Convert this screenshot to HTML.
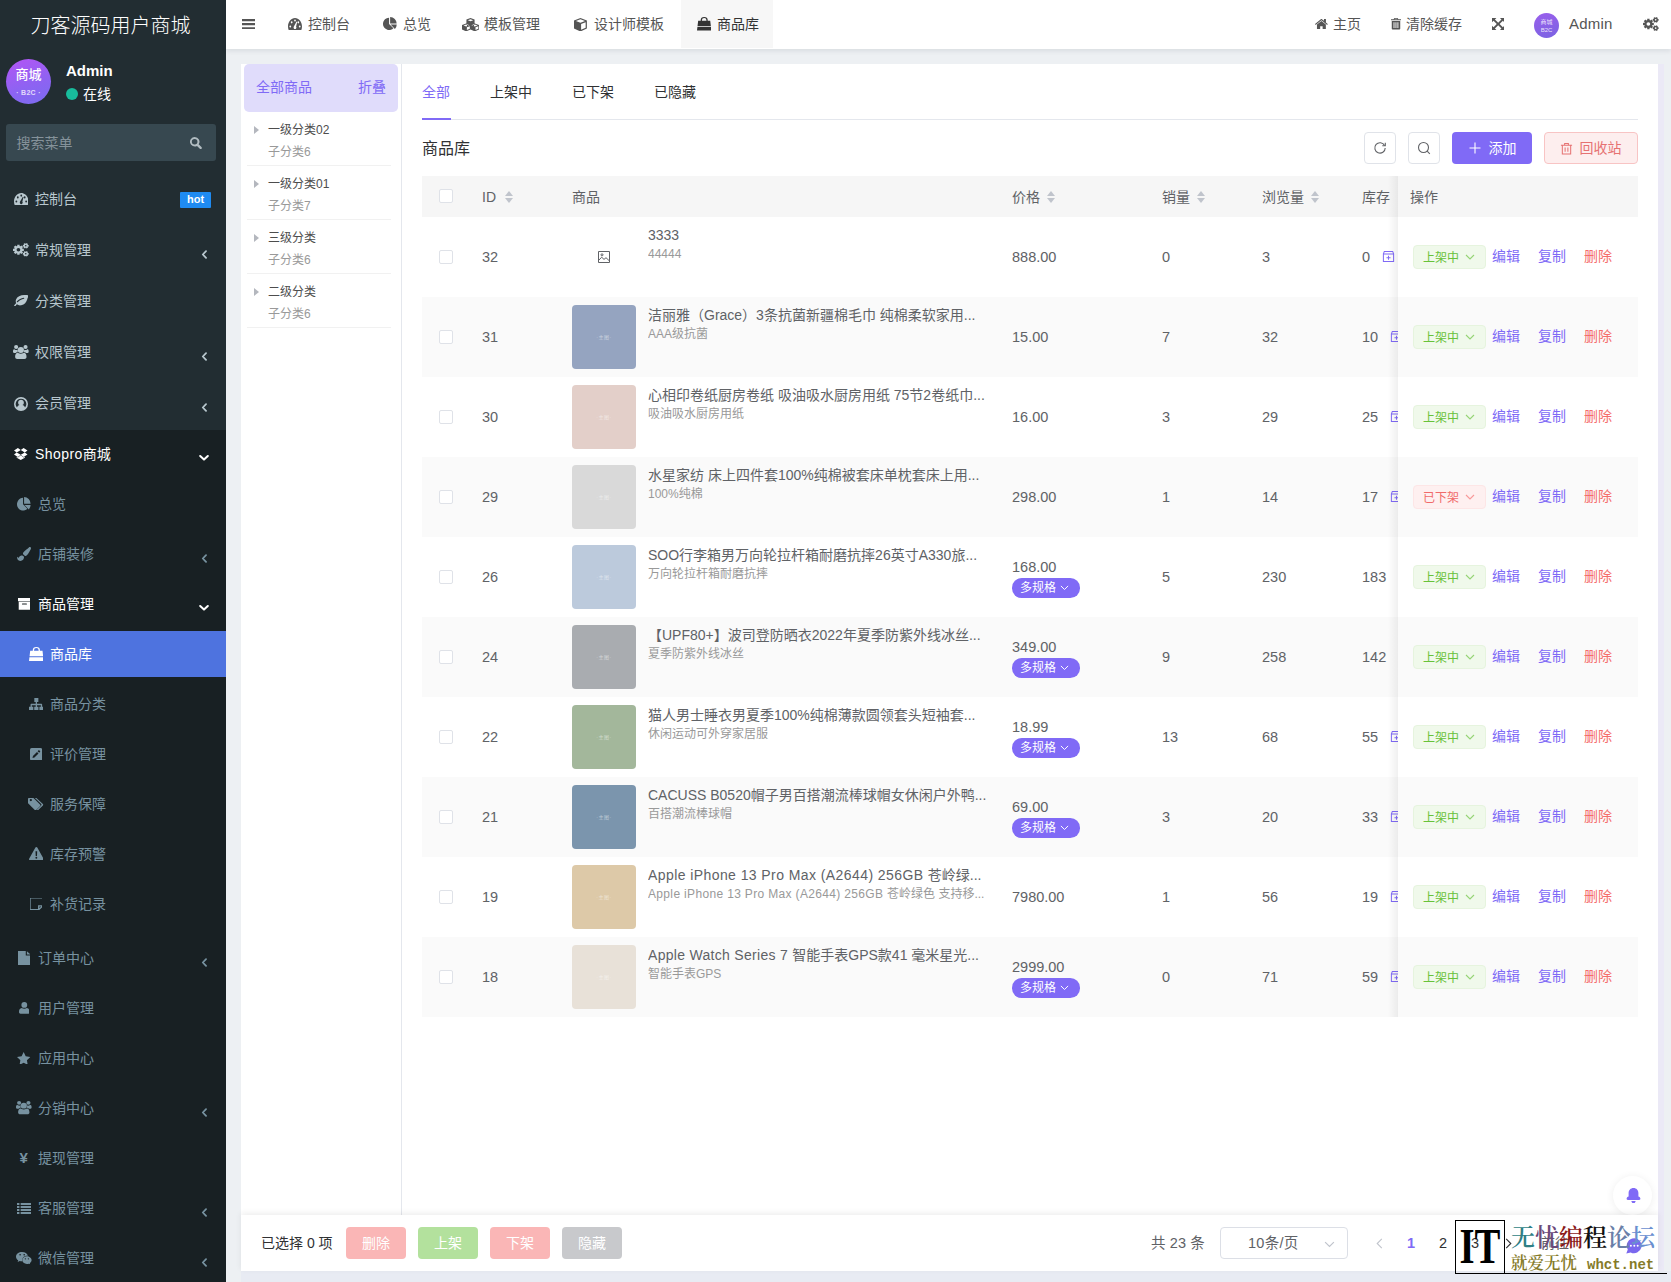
<!DOCTYPE html>
<html lang="zh-CN"><head><meta charset="utf-8"><title>商品库</title>
<style>

*{box-sizing:border-box;margin:0;padding:0}
html,body{width:1671px;height:1282px;overflow:hidden;background:#edf0f3}
body{font-family:"Liberation Sans","Noto Sans CJK SC",sans-serif;font-size:14px;color:#606266;-webkit-font-smoothing:antialiased}
#app{position:relative;width:1671px;height:1282px;overflow:hidden}
.ic{display:block}
.abs{position:absolute}
/* sidebar */
#side{position:absolute;left:0;top:0;width:226px;height:1282px;background:#222d32;color:#b8c7ce}
#side .dark{position:absolute;left:0;top:430px;width:226px;height:852px;background:#182023}
#logo{position:absolute;left:0;top:0;width:221px;height:50px;line-height:52px;text-align:center;color:#fff;font-size:20px;font-weight:300;letter-spacing:0}
#avatar{position:absolute;left:6px;top:59px;width:45px;height:45px;border-radius:50%;background:linear-gradient(160deg,#b455f5 0%,#8f62f2 55%,#7a6cf0 100%);color:#fff;text-align:center}
#avatar .a1{position:absolute;left:0;right:0;top:8px;font-size:13px;line-height:16px;font-weight:500}
#avatar .a2{position:absolute;left:0;right:0;top:30px;font-size:7px;line-height:8px;font-weight:bold;opacity:.75;letter-spacing:.3px}
#uname{position:absolute;left:66px;top:61px;font-size:15px;line-height:20px;font-weight:bold;color:#fff}
#ustat{position:absolute;left:83px;top:84px;font-size:14px;line-height:20px;color:#fff}
#udot{position:absolute;left:66px;top:88px;width:12px;height:12px;border-radius:50%;background:#18bc9c}
#sbox{position:absolute;left:6px;top:124px;width:210px;height:37px;background:#374850;border-radius:3px}
#sbox span{position:absolute;left:10.500px;top:0;line-height:38px;font-size:14px;color:#85929a}
#sbox svg{color:#b1bcc1}
.mi{position:absolute;left:0;width:226px;height:46px;color:#b8c7ce;font-size:14px}
.mi .t{position:absolute;top:0;line-height:46px;white-space:nowrap}
.mi.l1 .t{left:35px}.mi.l2 .t{left:38px}.mi.l3 .t{left:50px}
.mi.sub{color:#7792a0}
.mi.on{color:#fff}
.mi.act{background:#4e73df;color:#fff}
.mi .ar{position:absolute;left:200.500px;top:22.500px;width:7.200px;height:9px}
.hot{position:absolute;left:180px;top:16px;width:31px;height:16px;background:#1f8bf2;color:#fff;font-size:11px;font-weight:bold;line-height:15px;text-align:center;border-radius:1px}
/* topbar */
#top{position:absolute;left:226px;top:0;width:1445px;height:49px;background:#fff;box-shadow:0 2px 5px rgba(0,21,41,.09);color:#555}
#top .tab{position:absolute;top:0;height:48px;line-height:48px;font-size:14px;color:#555;white-space:nowrap}
#top .tabon{position:absolute;left:455px;top:0;width:92px;height:48px;background:#f7f7f7}

/* main */
#cat{position:absolute;left:241px;top:64px;width:161px;height:1151px;background:#fff;border-right:1px solid #e4e7ed}
#cat .hd{position:absolute;left:3px;top:0;width:154px;height:47.500px;background:#e0dcfb;border-radius:5px;color:#806af6;font-size:14px;line-height:47px}
#cat .hd .a{position:absolute;left:12px}#cat .hd .b{position:absolute;right:12px}
.ct{position:absolute;left:6px;width:144px;height:54px;border-bottom:1px solid #f1f1f1}
.ct .n{position:absolute;left:21px;top:7.500px;font-size:12px;line-height:20px;color:#4d4d4d}
.ct .s{position:absolute;left:21px;top:30px;font-size:12px;line-height:20px;color:#999}
.ct i{position:absolute;left:7px;top:13.500px;width:0;height:0;border-left:5px solid #b4b7be;border-top:4px solid transparent;border-bottom:4px solid transparent}
#main{position:absolute;left:402px;top:64px;width:1256px;height:1151px;background:#fff}
#min{position:absolute;left:0;top:-2px;width:1256px;height:1153px}
#rail{position:absolute;left:1658px;top:64px;width:6px;height:1207px;background:#ebe9f6}
#tabs{position:absolute;left:20px;top:0;width:1216px;height:58px;border-bottom:1px solid #e4e7ed;font-size:14px;color:#303133}
#tabs span{position:absolute;top:20px;line-height:20px}
#tabs .bar{position:absolute;left:0;top:56px;width:29px;height:2px;background:#806af6}
#title{position:absolute;left:20px;top:75px;font-size:16px;line-height:24px;color:#303133}
.btn{position:absolute;top:70px;height:32px;border-radius:4px;font-size:14px;line-height:30px;text-align:center}
.btn.w{width:32px;background:#fff;border:1px solid #e0e3e9;color:#606266}
.btn svg{position:absolute}
#th{position:absolute;left:20px;top:114px;width:1216px;height:41px;background:#f6f6f6;font-size:14px;color:#606266}
#th span{position:absolute;top:0;line-height:42.500px}
.sort{position:absolute;top:15px;width:8px;height:12px}
.sort:before,.sort:after{content:"";position:absolute;left:0;border-left:4px solid transparent;border-right:4px solid transparent}
.sort:before{top:0;border-bottom:5px solid #c0c4cc}
.sort:after{top:7px;border-top:5px solid #c0c4cc}
.cb{position:absolute;width:14px;height:14px;border:1px solid #dfe2e8;border-radius:2px;background:#fff}
.row{position:absolute;left:20px;width:1216px;height:80px;font-size:14px;color:#606266}
.row.alt{background:#fafafa}
.row .c{position:absolute;line-height:20px;white-space:nowrap;font-size:14.500px}
.row .img{position:absolute;left:150px;top:8px;width:64px;height:64px;border-radius:4px}
.row .img b{position:absolute;left:0;width:64px;text-align:center;top:29px;font-size:5px;line-height:6px;color:rgba(255,255,255,.5);font-weight:normal;white-space:nowrap;letter-spacing:.5px}
.row .tt{position:absolute;left:226px;top:8px;width:340px;font-size:14px;line-height:20px;color:#606266;white-space:nowrap;overflow:hidden}
.row .st{position:absolute;left:226px;top:28px;width:340px;font-size:12px;line-height:18px;color:#999;white-space:nowrap;overflow:hidden}
.pill{position:absolute;left:590px;top:41px;width:68px;height:19.500px;border-radius:9.750px;background:#806af6;color:#fff;font-size:12px;line-height:20px;padding-left:8px}
.pill svg{position:absolute;left:48px;top:6.500px}
.fix{position:absolute;left:976px;top:0;width:240px;height:80px;background:#fff}
.row.alt .fix{background:#fafafa}
.tag{position:absolute;left:15px;top:28px;width:73px;height:24px;border-radius:4px;font-size:12px;line-height:25.500px;padding-left:9px}
.tag.g{background:#f0f9eb;border:1px solid #e6f4de;color:#67c23a}
.tag.r{background:#fef0f0;border:1px solid #fde6e6;color:#f06a6a}
.tag svg{position:absolute;left:51px;top:8px}
.fix a{position:absolute;top:29px;line-height:20px;font-size:14px;text-decoration:none}
.fix a.p{color:#806af6}.fix a.d{color:#f56c6c}
#shadow{position:absolute;left:986px;top:114px;width:10px;height:841px;background:linear-gradient(to right,rgba(0,0,0,0),rgba(0,0,0,.06))}
/* footer */
#band{position:absolute;left:241px;top:1271px;width:1430px;height:11px;background:#e8ebf3}
#foot{position:absolute;left:241px;top:1215px;width:1417px;height:56px;background:#fff;box-shadow:0 -2px 6px rgba(0,0,0,.07);font-size:14px;color:#303133}
#foot .fb{position:absolute;top:12px;width:60px;height:32px;border-radius:4px;color:#fff;text-align:center;line-height:32px;font-size:14px}
#foot span{position:absolute;line-height:20px;top:18px;white-space:nowrap}
#psel{position:absolute;left:979px;top:12px;width:128px;height:32px;border:1px solid #dcdfe6;border-radius:4px}
.fab{position:absolute;width:40px;height:40px;border-radius:50%;background:#fff;box-shadow:0 1px 8px rgba(0,0,0,.07)}
/* watermark */
#wm{position:absolute;left:1455px;top:1220px;width:216px;height:56px}
#wm .it{position:absolute;left:0;top:0;width:50px;height:54px;border:1px solid #000}
#wm .it b{position:absolute;left:-8px;top:-3px;width:64px;text-align:center;font-family:"Liberation Serif",serif;font-weight:bold;font-size:51px;line-height:56px;color:#000;transform:scaleX(.76);transform-origin:50% 50%}
#wm .l1{position:absolute;left:56px;top:-1px;font-family:"Noto Serif CJK SC","Liberation Serif",serif;font-weight:600;font-size:24px;line-height:34px;white-space:nowrap}
#wm .l2{position:absolute;left:56px;top:32px;font-family:"Noto Serif CJK SC","Liberation Serif",serif;font-size:16.500px;line-height:20px;color:#857a28;white-space:nowrap;font-weight:600}
#wm .l2 i{font-style:normal;font-family:"Liberation Mono",monospace;font-weight:bold;font-size:14px;margin-left:10px}
#wm .ul{position:absolute;left:0;top:53px;width:212px;height:1px;background:#000}

</style></head><body>
<div id="app">
<div id="side">
<div class="dark"></div>
<div id="logo">刀客源码用户商城</div>
<div id="avatar"><div class="a1">商城</div><div class="a2">· B2C ·</div></div>
<div id="uname">Admin</div><div id="udot"></div><div id="ustat">在线</div>
<div id="sbox"><span>搜索菜单</span><svg class="ic" style="position:absolute;left:184.3px;top:12.9px;" width="11.8" height="12" viewBox="1.27 1 13.83 14.49" preserveAspectRatio="none"><path fill="currentColor" fill-rule="evenodd" d="M6.700 1a5.700 5.700 0 014.700 8.900l3.300 3.300a1.300 1.300 0 01-1.900 1.900l-3.300-3.300A5.700 5.700 0 116.700 1zm0 2.400a3.300 3.300 0 100 6.600 3.300 3.300 0 000-6.600z"/></svg></div>
<div class="mi l1 " style="top:176px"><svg class="ic" style="position:absolute;left:13.8px;top:16.8px;" width="14.5" height="12.4" viewBox="0 2.2 16 11.6" preserveAspectRatio="none"><path fill="currentColor" d="M8 2.2C3.6 2.2 0 5.8 0 10.2c0 1.3.3 2.5.9 3.6h14.2c.6-1.1.9-2.300.9-3.6 0-4.4-3.600-8-8-8zM8 3.600a1 1 0 110 2 1 1 0 010-2zM2.600 11.200a1 1 0 110-2 1 1 0 010 2zM4.200 7.300a1 1 0 110-2 1 1 0 010 2zM9.400 11.800a1.600 1.600 0 01-2.800 0c-.3-.6-.2-1.300.3-1.800L9.800 5.600l.7.300-1.300 4.600c.5.300.5.900.2 1.300zM11.800 7.300a1 1 0 110-2 1 1 0 010 2zM13.400 11.200a1 1 0 110-2 1 1 0 010 2z"/></svg><span class="t">控制台</span><span class="hot">hot</span></div><div class="mi l1 " style="top:227px"><svg class="ic" style="position:absolute;left:13.2px;top:16.2px;" width="15.7" height="13.6" viewBox="0.13 0.57 15.82 14.86" preserveAspectRatio="none"><path fill="currentColor" fill-rule="evenodd" d="M9.73 6.82L11.07 6.80L11.07 9.20L9.73 9.18L9.36 10.09L10.32 11.02L8.62 12.72L7.69 11.76L6.78 12.13L6.80 13.47L4.40 13.47L4.42 12.13L3.51 11.76L2.58 12.72L0.88 11.02L1.84 10.09L1.47 9.18L0.13 9.20L0.13 6.80L1.47 6.82L1.84 5.91L0.88 4.98L2.58 3.28L3.51 4.24L4.42 3.87L4.40 2.53L6.80 2.53L6.78 3.87L7.69 4.24L8.62 3.28L10.32 4.98L9.36 5.91ZM3.70 8.00a1.90 1.90 0 1 0 3.80 0a1.90 1.90 0 1 0 -3.80 0Z M15.12 2.71L15.95 2.64L15.95 4.56L15.12 4.49L14.83 4.99L15.30 5.67L13.64 6.63L13.29 5.88L12.71 5.88L12.36 6.63L10.70 5.67L11.17 4.99L10.88 4.49L10.05 4.56L10.05 2.64L10.88 2.71L11.17 2.21L10.70 1.53L12.36 0.57L12.71 1.32L13.29 1.32L13.64 0.57L15.30 1.53L14.83 2.21ZM12.15 3.60a0.85 0.85 0 1 0 1.70 0a0.85 0.85 0 1 0 -1.70 0Z M15.12 11.51L15.95 11.44L15.95 13.36L15.12 13.29L14.83 13.79L15.30 14.47L13.64 15.43L13.29 14.68L12.71 14.68L12.36 15.43L10.70 14.47L11.17 13.79L10.88 13.29L10.05 13.36L10.05 11.44L10.88 11.51L11.17 11.01L10.70 10.33L12.36 9.37L12.71 10.12L13.29 10.12L13.64 9.37L15.30 10.33L14.83 11.01ZM12.15 12.40a0.85 0.85 0 1 0 1.70 0a0.85 0.85 0 1 0 -1.70 0Z"/></svg><span class="t">常规管理</span><svg class="ar" viewBox="0 0 8 10"><path d="M5.6 1.200L2 5l3.600 3.800" fill="none" stroke="currentColor" stroke-width="2" stroke-linecap="round" stroke-linejoin="round"/></svg></div><div class="mi l1 " style="top:278px"><svg class="ic" style="position:absolute;left:13.7px;top:16.6px;" width="14.6" height="11.7" viewBox="0.02 2.58 15.69 11.82" preserveAspectRatio="none"><path fill="currentColor" d="M15.600 3.200C15 2.800 13.500 2.500 11 2.600 7 2.700 3.400 4.200 2.200 7.200c-.5 1.300-.4 2.600.1 3.700-.8.700-1.600 1.500-2.200 2.500-.2.300 0 .7.300.9.400.2.800.1 1-.2.500-.800 1.100-1.500 1.800-2.100 1.200 1 2.900 1.400 4.600 1 3.700-.9 5.400-3.300 6.300-5.700.5-1.300.9-2.400 1.400-3.200.2-.3.300-.7.100-.9zM10.700 6.400C8 6.800 5.800 8.100 4 9.800c-.2.200-.6.200-.8 0-.2-.2-.2-.6 0-.8C5.200 7.100 7.600 5.700 10.500 5.300c.3 0 .6.200.6.500.1.300-.1.600-.4.600z"/></svg><span class="t">分类管理</span></div><div class="mi l1 " style="top:329px"><svg class="ic" style="position:absolute;left:13.2px;top:16.0px;" width="15.7" height="14" viewBox="0 0.5 16 14.9" preserveAspectRatio="none"><path fill="currentColor" d="M4.900 8c-.9 0-1.700.400-2.200 1.100H1.600C.7 9.100 0 8.700 0 7.700 0 6.900 0 4.900 1.200 4.900c.200 0 1.100.8 2.300.8.400 0 .8-.1 1.200-.2 0 .2-.1.400-.1.600 0 .7.200 1.300.3 1.900zM13.800 13.300c0 1.300-.9 2.100-2.100 2.100H4.300c-1.300 0-2.100-.8-2.100-2.100 0-1.800.4-4.500 2.700-4.500.3 0 1.300 1.100 3.100 1.100s2.800-1.100 3.100-1.100c2.300 0 2.700 2.700 2.700 4.500zM5.300 2.600a2.100 2.100 0 11-4.200 0 2.100 2.100 0 014.200 0zM11.200 5.800a3.200 3.200 0 11-6.400 0 3.200 3.200 0 016.400 0zM16 7.700c0 1-.7 1.400-1.600 1.400h-1.100C12.800 8.400 12 8 11.100 8c.1-.600.3-1.200.3-1.900 0-.2 0-.4-.1-.6.400.1.800.2 1.200.2 1.200 0 2.100-.8 2.300-.8C16 4.900 16 6.900 16 7.700zM14.900 2.600a2.100 2.100 0 11-4.200 0 2.100 2.100 0 014.200 0z"/></svg><span class="t">权限管理</span><svg class="ar" viewBox="0 0 8 10"><path d="M5.6 1.200L2 5l3.600 3.800" fill="none" stroke="currentColor" stroke-width="2" stroke-linecap="round" stroke-linejoin="round"/></svg></div><div class="mi l1 " style="top:380px"><svg class="ic" style="position:absolute;left:14.0px;top:16.5px;" width="14" height="14" viewBox="0.5 0.5 15 15" preserveAspectRatio="none"><path fill="currentColor" fill-rule="evenodd" d="M8 .5a7.500 7.500 0 100 15 7.500 7.500 0 000-15zm0 1.800a5.700 5.700 0 014.300 9.400c-.6-1.300-1.600-2.200-2.800-2.500a3.100 3.100 0 10-3 0c-1.200.300-2.200 1.200-2.800 2.500A5.700 5.700 0 018 2.300z"/></svg><span class="t">会员管理</span><svg class="ar" viewBox="0 0 8 10"><path d="M5.6 1.200L2 5l3.600 3.800" fill="none" stroke="currentColor" stroke-width="2" stroke-linecap="round" stroke-linejoin="round"/></svg></div><div class="mi l1 on" style="top:431px"><svg class="ic" style="position:absolute;left:14.2px;top:17.0px;" width="13.5" height="12" viewBox="0 1 16 14.8" preserveAspectRatio="none"><path fill="currentColor" d="M4.600 1L0 4l3.200 2.500L8 3.600zM0 9.100l4.600 3L8 9.400 3.200 6.500zM8 9.400l3.400 2.700 4.600-3-3.200-2.600zM16 4l-4.600-3L8 3.600l4.800 2.900zM8 10l-3.400 2.800-1.400-.9v1l4.800 2.900 4.800-2.900v-1l-1.400.9z"/></svg><span class="t"><span style="letter-spacing:.45px">Shopro</span>商城</span><svg class="ar" viewBox="0 0 10 8" style="width:10px;height:8px;left:199px;top:23px"><path d="M1.200 2l3.800 3.600L8.800 2" fill="none" stroke="currentColor" stroke-width="2" stroke-linecap="round" stroke-linejoin="round"/></svg></div><div class="mi l2 sub" style="top:481px"><svg class="ic" style="position:absolute;left:17.2px;top:16.2px;" width="13.6" height="13.6" viewBox="0.14 0.4 15.46 14.7" preserveAspectRatio="none"><path fill="currentColor" d="M7 8.200l4.900 4.900A6.900 6.900 0 117 1.300v6.900zM8.700 9H15.600a6.900 6.900 0 01-2 4.900L8.700 9zM15.600 7.800H8.200V.4a7.400 7.400 0 017.400 7.400z"/></svg><span class="t">总览</span></div><div class="mi l2 sub" style="top:531px"><svg class="ic" style="position:absolute;left:17.0px;top:16.0px;" width="14" height="14" viewBox="-0.0 0.2 16 15.3" preserveAspectRatio="none"><path fill="currentColor" d="M14.600.200c.7 0 1.400.6 1.400 1.300 0 .4-.1.800-.3 1.200-.8 1.500-2.800 5.200-4.400 6.600-.800.700-1.700 1.100-2.500.5L7 8c-.500-.9 0-1.700.700-2.400C9.300 4.100 12.400 1.700 13.600.7c.3-.3.600-.5 1-.5zM6.200 9.400l1.900 1.500c.1 2.500-1.600 4.600-4.300 4.600C1.100 15.500 0 13.300 0 10.900c.3.200 1.300 1 1.700 1 .2 0 .4-.1.500-.3.700-1.800 2-2.100 4-2.200z"/></svg><span class="t">店铺装修</span><svg class="ar" viewBox="0 0 8 10"><path d="M5.6 1.200L2 5l3.600 3.800" fill="none" stroke="currentColor" stroke-width="2" stroke-linecap="round" stroke-linejoin="round"/></svg></div><div class="mi l2 on" style="top:581px"><svg class="ic" style="position:absolute;left:17.6px;top:17.1px;" width="12.9" height="11.7" viewBox="0.8 1.5 14.4 13" preserveAspectRatio="none"><path fill="currentColor" d="M.8 1.500h14.400v3.600H.8zM1.600 5.800h12.800v8.700H1.600zM5.800 7.500a.6.600 0 000 1.200h4.400a.6.600 0 000-1.200z" fill-rule="evenodd"/></svg><span class="t">商品管理</span><svg class="ar" viewBox="0 0 10 8" style="width:10px;height:8px;left:199px;top:23px"><path d="M1.200 2l3.800 3.600L8.800 2" fill="none" stroke="currentColor" stroke-width="2" stroke-linecap="round" stroke-linejoin="round"/></svg></div><div class="mi l3 act" style="top:631px"><svg class="ic" style="position:absolute;left:28.6px;top:16.0px;" width="14.7" height="14" viewBox="1.2 0.3 13.6 15.4" preserveAspectRatio="none"><path fill="currentColor" fill-rule="evenodd" d="M8 .3a3.300 3.300 0 00-3.300 3.300v.900H2.300L1.200 15.700h13.600L13.700 4.500h-2.400v-.9A3.300 3.300 0 008 .3zm-2.100 3.300a2.100 2.100 0 014.200 0v.900H5.900v-.9zM1.700 10.600h12.600l.08.850H1.620l.08-.85z"/></svg><span class="t">商品库</span></div><div class="mi l3 sub" style="top:681px"><svg class="ic" style="position:absolute;left:28.6px;top:16.6px;" width="14.7" height="12.9" viewBox="0 0.9 16 12.7" preserveAspectRatio="none"><path fill="currentColor" d="M5.800.9h4.400v3.900H8.700v1.700h4.900c.4 0 .7.300.7.700v2.400H16v4H11.300v-4h1.600V8H8.700v1.600h1.600v4H5.700v-4h1.600V8H3.100v1.600h1.600v4H0v-4h1.700V7.200c0-.4.300-.7.700-.7h4.900V4.800H5.800z"/></svg><span class="t">商品分类</span></div><div class="mi l3 sub" style="top:731px"><svg class="ic" style="position:absolute;left:29.9px;top:16.8px;" width="12.2" height="12.4" viewBox="1.2 1.3 13.6 13.6" preserveAspectRatio="none"><path fill="currentColor" fill-rule="evenodd" d="M3 1.300h10a1.800 1.800 0 011.800 1.800v10a1.800 1.800 0 01-1.800 1.800H3a1.800 1.800 0 01-1.800-1.800v-10A1.800 1.800 0 013 1.300zm7.800 2.500L9.700 4.900l1.700 1.700 1.100-1.100a.5.500 0 000-.7l-1-1a.5.500 0 00-.7 0zM9 5.600L4.500 10.100 4 12.300l2.200-.5L10.700 7.300z"/></svg><span class="t">评价管理</span></div><div class="mi l3 sub" style="top:781px"><svg class="ic" style="position:absolute;left:28.4px;top:16.9px;" width="15.2" height="12.2" viewBox="0 1.2 16 13.2" preserveAspectRatio="none"><path fill="currentColor" d="M0 2v4.400c0 .3.100.6.300.8l6.900 6.900c.4.400 1 .4 1.400 0l4.300-4.300c.4-.4.400-1 0-1.400L6 1.500c-.2-.2-.5-.3-.8-.3H.8C.4 1.200 0 1.600 0 2zm3 2.600a1.200 1.200 0 110-2.400 1.200 1.200 0 010 2.400z"/><path fill="currentColor" d="M10.800 14.100l4.900-4.900c.4-.4.400-1 0-1.400L8.800 1.200H7.300l6.600 6.600c.4.400.4 1 0 1.400L9.300 13.800l.1.300c.4.400 1 .4 1.400 0z"/></svg><span class="t">服务保障</span></div><div class="mi l3 sub" style="top:831px"><svg class="ic" style="position:absolute;left:28.6px;top:15.8px;" width="14.7" height="13.3" viewBox="0.06 0.8 15.88 14.5" preserveAspectRatio="none"><path fill="currentColor" fill-rule="evenodd" d="M8 .8c.4 0 .8.200 1 .6l6.800 12.300c.4.700-.1 1.600-1 1.600H1.200c-.9 0-1.400-.9-1-1.600L7 1.400c.2-.4.600-.6 1-.6zM7.100 5.500l.2 5h1.400l.2-5zM8 11.500a1 1 0 100 2 1 1 0 000-2z"/></svg><span class="t">库存预警</span></div><div class="mi l3 sub" style="top:881px"><svg class="ic" style="position:absolute;left:29.6px;top:17.1px;" width="12.9" height="11.7" viewBox="1.8 1.8 12.4 12.4" preserveAspectRatio="none"><path fill="none" stroke="currentColor" stroke-width="1.300" d="M1.800 1.800h12.400v8.400l-4 4H1.800zM14.200 10.200h-4v4"/></svg><span class="t">补货记录</span></div><div class="mi l2 sub" style="top:935px"><svg class="ic" style="position:absolute;left:17.6px;top:16.0px;" width="12.9" height="14" viewBox="2.2 0.5 11.6 15" preserveAspectRatio="none"><path fill="currentColor" d="M2.200.500h7v4.800h4.600v10.200H2.200zM10.200.7l3.400 3.600h-3.400z"/></svg><span class="t">订单中心</span><svg class="ar" viewBox="0 0 8 10"><path d="M5.6 1.200L2 5l3.600 3.800" fill="none" stroke="currentColor" stroke-width="2" stroke-linecap="round" stroke-linejoin="round"/></svg></div><div class="mi l2 sub" style="top:985px"><svg class="ic" style="position:absolute;left:18.7px;top:17.1px;" width="10.6" height="11.7" viewBox="1.8 1.2 12.4 13.7" preserveAspectRatio="none"><path fill="currentColor" d="M8 1.200a3.400 3.400 0 110 6.800 3.400 3.400 0 010-6.800zM11 8.200c2.300.2 3.200 2.400 3.200 4.800 0 1.200-.8 1.900-1.800 1.900H3.600c-1 0-1.800-.7-1.800-1.900 0-2.400.9-4.600 3.200-4.800.8.600 1.800 1 3 1s2.200-.4 3-1z"/></svg><span class="t">用户管理</span></div><div class="mi l2 sub" style="top:1035px"><svg class="ic" style="position:absolute;left:17.4px;top:16.6px;" width="13.3" height="12.9" viewBox="0.5 0.6 15 14.3" preserveAspectRatio="none"><path fill="currentColor" d="M8 .6l2.300 4.800 5.200.7-3.800 3.600.9 5.200L8 12.400l-4.600 2.500.9-5.200L.5 6.100l5.200-.7z"/></svg><span class="t">应用中心</span></div><div class="mi l2 sub" style="top:1085px"><svg class="ic" style="position:absolute;left:16.2px;top:16.4px;" width="15.6" height="13.3" viewBox="0 0.5 16 14.9" preserveAspectRatio="none"><path fill="currentColor" d="M4.900 8c-.9 0-1.700.400-2.200 1.100H1.600C.7 9.100 0 8.700 0 7.700 0 6.900 0 4.900 1.200 4.900c.200 0 1.100.8 2.300.8.400 0 .8-.1 1.200-.2 0 .2-.1.400-.1.600 0 .7.200 1.300.3 1.900zM13.800 13.300c0 1.300-.9 2.100-2.100 2.100H4.300c-1.300 0-2.100-.8-2.100-2.100 0-1.800.4-4.500 2.700-4.500.3 0 1.300 1.100 3.100 1.100s2.800-1.100 3.100-1.100c2.300 0 2.700 2.700 2.700 4.500zM5.300 2.600a2.100 2.100 0 11-4.200 0 2.100 2.100 0 014.200 0zM11.200 5.800a3.200 3.200 0 11-6.400 0 3.200 3.200 0 016.400 0zM16 7.700c0 1-.7 1.400-1.600 1.400h-1.100C12.800 8.400 12 8 11.100 8c.1-.600.3-1.200.3-1.900 0-.2 0-.4-.1-.6.400.1.800.2 1.200.2 1.200 0 2.100-.8 2.300-.8C16 4.900 16 6.900 16 7.700zM14.900 2.600a2.100 2.100 0 11-4.200 0 2.100 2.100 0 014.200 0z"/></svg><span class="t">分销中心</span><svg class="ar" viewBox="0 0 8 10"><path d="M5.6 1.200L2 5l3.600 3.800" fill="none" stroke="currentColor" stroke-width="2" stroke-linecap="round" stroke-linejoin="round"/></svg></div><div class="mi l2 sub" style="top:1135px"><span class="t" style="left:19.500px;font-weight:bold;font-size:15px">¥</span><span class="t">提现管理</span></div><div class="mi l2 sub" style="top:1185px"><svg class="ic" style="position:absolute;left:16.8px;top:17.5px;" width="14.4" height="11" viewBox="0.3 2.3 15.4 12.1" preserveAspectRatio="none"><path fill="currentColor" d="M.3 2.300h2.600v2.200H.3zM4.200 2.300h11.500v2.200H4.200zM.3 5.600h2.600v2.200H.3zM4.200 5.600h11.500v2.200H4.200zM.3 8.900h2.600v2.200H.3zM4.200 8.900h11.500v2.200H4.200zM.3 12.200h2.600v2.200H.3zM4.200 12.200h11.500v2.200H4.200z"/></svg><span class="t">客服管理</span><svg class="ar" viewBox="0 0 8 10"><path d="M5.6 1.200L2 5l3.600 3.800" fill="none" stroke="currentColor" stroke-width="2" stroke-linecap="round" stroke-linejoin="round"/></svg></div><div class="mi l2 sub" style="top:1235px"><svg class="ic" style="position:absolute;left:16.2px;top:16.8px;" width="15.6" height="12.5" viewBox="0 1.8 16 13.8" preserveAspectRatio="none"><path fill="currentColor" d="M6.300 1.800C2.800 1.800 0 4.100 0 7c0 1.600.9 3 2.300 4l-.6 1.800 2.100-1.100c.8.200 1.400.3 2.100.3h.6a4.400 4.400 0 01-.2-1.200c0-2.600 2.300-4.800 5.300-4.800h.6C11.700 3.600 9.200 1.800 6.300 1.800zM4.200 4a.8.800 0 110 1.700.8.800 0 010-1.700zm4.200 0a.8.800 0 110 1.700.8.800 0 010-1.700z"/><path fill="currentColor" d="M16 10.700c0-2.400-2.300-4.300-4.800-4.300-2.700 0-4.800 1.900-4.800 4.300s2.100 4.300 4.800 4.300c.6 0 1.100-.1 1.700-.3l1.600.9-.4-1.400c1.100-.9 1.900-2.100 1.900-3.500zm-6.400-.7a.6.600 0 110-1.300.6.600 0 010 1.300zm3.100 0a.6.600 0 110-1.300.6.600 0 010 1.300z"/></svg><span class="t">微信管理</span><svg class="ar" viewBox="0 0 8 10"><path d="M5.6 1.200L2 5l3.600 3.800" fill="none" stroke="currentColor" stroke-width="2" stroke-linecap="round" stroke-linejoin="round"/></svg></div>
</div>
<div id="top">
<div class="tabon"></div>
<div style=""><svg class="ic" style="position:absolute;left:15.9px;top:18.6px;" width="13" height="10.4" viewBox="1.5 2.8 13 10.4" preserveAspectRatio="none"><path fill="currentColor" d="M1.500 2.800h13v2.200h-13zM1.500 6.900h13v2.200h-13zM1.500 11h13v2.200h-13z"/></svg></div>
<div style=""><svg class="ic" style="position:absolute;left:61.9px;top:18.0px;" width="14" height="12.3" viewBox="0 2.2 16 11.6" preserveAspectRatio="none"><path fill="currentColor" d="M8 2.2C3.6 2.2 0 5.8 0 10.2c0 1.3.3 2.5.9 3.6h14.2c.6-1.1.9-2.300.9-3.6 0-4.4-3.600-8-8-8zM8 3.600a1 1 0 110 2 1 1 0 010-2zM2.600 11.200a1 1 0 110-2 1 1 0 010 2zM4.200 7.300a1 1 0 110-2 1 1 0 010 2zM9.400 11.800a1.600 1.600 0 01-2.800 0c-.3-.6-.2-1.300.3-1.800L9.800 5.600l.7.300-1.300 4.600c.5.300.5.900.2 1.300zM11.800 7.300a1 1 0 110-2 1 1 0 010 2zM13.400 11.200a1 1 0 110-2 1 1 0 010 2z"/></svg></div><span class="tab" style="left:82px;">控制台</span>
<div style=""><svg class="ic" style="position:absolute;left:157.0px;top:16.9px;" width="13.7" height="13" viewBox="0.14 0.4 15.46 14.7" preserveAspectRatio="none"><path fill="currentColor" d="M7 8.200l4.900 4.900A6.900 6.900 0 117 1.300v6.900zM8.700 9H15.600a6.900 6.900 0 01-2 4.900L8.700 9zM15.600 7.800H8.200V.4a7.400 7.400 0 017.400 7.400z"/></svg></div><span class="tab" style="left:177px;">总览</span>
<div style=""><svg class="ic" style="position:absolute;left:236.0px;top:17.5px;" width="17" height="13.4" viewBox="0.5 0.3 15 13.6" preserveAspectRatio="none"><path fill="currentColor" d="M8 .3l3.600 1.500v3.900l.2.100 3.700 1.600V12l-3.700 1.900L8 12l-3.800 1.900L.5 12V7.400l3.700-1.600.2-.1V1.800zM8 1.500L5.600 2.500 8 3.500l2.400-1zM4.900 6.300v2.500L7.200 7.700 4.900 6.700zm6.200 0v.4L8.800 7.700l2.300 1.100zM4.200 6.900L1.800 7.900l2.400 1 2.400-1zm7.600 0L9.400 7.900l2.400 1 2.400-1zM4.800 9.700v2.900l2.600-1.300V8.600zm7.600 0v2.900l2.500-1.300V8.600z" fill-rule="evenodd"/></svg></div><span class="tab" style="left:258px;">模板管理</span>
<div style=""><svg class="ic" style="position:absolute;left:347.8px;top:17.6px;" width="12.9" height="13.5" viewBox="1.2 0.5 13.6 15" preserveAspectRatio="none"><path fill="currentColor" fill-rule="evenodd" d="M8 .5l6.800 2.900v8.800L8 15.500 1.200 12.200V3.400zM8 1.900L3.200 3.900 8 5.900l4.800-2zM8.700 7.100v6.500l4.800-2.300V5.100z"/></svg></div><span class="tab" style="left:368px;">设计师模板</span>
<div style="color:#333;"><svg class="ic" style="position:absolute;left:470.5px;top:17.2px;" width="14.4" height="13.6" viewBox="1.2 0.3 13.6 15.4" preserveAspectRatio="none"><path fill="currentColor" fill-rule="evenodd" d="M8 .3a3.300 3.300 0 00-3.300 3.300v.900H2.300L1.200 15.700h13.600L13.700 4.500h-2.400v-.9A3.300 3.300 0 008 .3zm-2.100 3.300a2.100 2.100 0 014.200 0v.900H5.900v-.9zM1.700 10.600h12.600l.08.850H1.620l.08-.85z"/></svg></div><span class="tab" style="left:491px;color:#333;">商品库</span>
<div style=""><svg class="ic" style="position:absolute;left:1089.0px;top:18.7px;" width="12.8" height="10.4" viewBox="0.22 1.17 15.55 12.73" preserveAspectRatio="none"><path fill="currentColor" d="M8 3.500l5.400 4.500v5.300c0 .3-.3.600-.6.600H9.500v-3.700h-3v3.700H3.200c-.3 0-.6-.3-.6-.6V8zM15.700 7.600l-.6.700c-.1.100-.3.100-.4 0L8 2.700 1.300 8.300c-.1.100-.3.100-.4 0l-.6-.7c-.1-.1-.1-.3 0-.4L7.300 1.400c.4-.3 1-.3 1.400 0l2.400 2V1.500c0-.2.100-.3.300-.3h1.800c.2 0 .3.100.3.300v4l2.200 1.800c.1 0 .1.200 0 .3z"/></svg></div><span class="tab" style="left:1107px;">主页</span>
<div style=""><svg class="ic" style="position:absolute;left:1165.0px;top:18.3px;" width="10" height="11.6" viewBox="2.1 0.6 11.8 14.8" preserveAspectRatio="none"><path fill="currentColor" fill-rule="evenodd" d="M6 .6h4l.8 1.500h3.100v1.400H2.100V2.100h3.100zm.5 1.100l-.3.400h3.600l-.3-.4zM3 4.300h10v9.800c0 .7-.6 1.300-1.300 1.300H4.300c-.7 0-1.300-.6-1.300-1.300zm2.100 1.600v7.400h1.100V5.900zm2.300 0v7.400h1.100V5.900zm2.300 0v7.400h1.100V5.900z"/></svg></div><span class="tab" style="left:1180px;">清除缓存</span>
<div style=""><svg class="ic" style="position:absolute;left:1266.0px;top:17.9px;" width="12.4" height="12" viewBox="1 1 14 14" preserveAspectRatio="none"><path fill="currentColor" d="M1 1h5L4.300 2.700 6.900 5.300 8 6.400l1.100-1.100 2.600-2.600L10 1h5v5l-1.700-1.700-2.600 2.600L9.600 8l1.100 1.100 2.600 2.600L15 10v5h-5l1.700-1.700-2.600-2.600L8 9.600 6.900 10.700l-2.600 2.600L6 15H1v-5l1.700 1.700 2.600-2.600L6.400 8 5.300 6.900 2.700 4.300 1 6z"/></svg></div>
<div class="abs" style="left:1308px;top:12.700px;width:25px;height:25px;border-radius:50%;background:linear-gradient(165deg,#9a5fec,#7a63e2);color:rgba(255,255,255,.85);font-size:6px;line-height:8px;text-align:center;padding-top:5px">商城<br>B2C</div>
<span class="tab" style="left:1343px;font-size:15px;letter-spacing:.2px">Admin</span>
<div style=""><svg class="ic" style="position:absolute;left:1417.3px;top:17.2px;" width="15.6" height="14" viewBox="0.13 0.57 15.82 14.86" preserveAspectRatio="none"><path fill="currentColor" fill-rule="evenodd" d="M9.73 6.82L11.07 6.80L11.07 9.20L9.73 9.18L9.36 10.09L10.32 11.02L8.62 12.72L7.69 11.76L6.78 12.13L6.80 13.47L4.40 13.47L4.42 12.13L3.51 11.76L2.58 12.72L0.88 11.02L1.84 10.09L1.47 9.18L0.13 9.20L0.13 6.80L1.47 6.82L1.84 5.91L0.88 4.98L2.58 3.28L3.51 4.24L4.42 3.87L4.40 2.53L6.80 2.53L6.78 3.87L7.69 4.24L8.62 3.28L10.32 4.98L9.36 5.91ZM3.70 8.00a1.90 1.90 0 1 0 3.80 0a1.90 1.90 0 1 0 -3.80 0Z M15.12 2.71L15.95 2.64L15.95 4.56L15.12 4.49L14.83 4.99L15.30 5.67L13.64 6.63L13.29 5.88L12.71 5.88L12.36 6.63L10.70 5.67L11.17 4.99L10.88 4.49L10.05 4.56L10.05 2.64L10.88 2.71L11.17 2.21L10.70 1.53L12.36 0.57L12.71 1.32L13.29 1.32L13.64 0.57L15.30 1.53L14.83 2.21ZM12.15 3.60a0.85 0.85 0 1 0 1.70 0a0.85 0.85 0 1 0 -1.70 0Z M15.12 11.51L15.95 11.44L15.95 13.36L15.12 13.29L14.83 13.79L15.30 14.47L13.64 15.43L13.29 14.68L12.71 14.68L12.36 15.43L10.70 14.47L11.17 13.79L10.88 13.29L10.05 13.36L10.05 11.44L10.88 11.51L11.17 11.01L10.70 10.33L12.36 9.37L12.71 10.12L13.29 10.12L13.64 9.37L15.30 10.33L14.83 11.01ZM12.15 12.40a0.85 0.85 0 1 0 1.70 0a0.85 0.85 0 1 0 -1.70 0Z"/></svg></div>
</div>
<div id="rail"></div>
<div id="cat"><div class="hd"><span class="a">全部商品</span><span class="b">折叠</span></div><div class="ct" style="top:48px"><i></i><span class="n">一级分类02</span><span class="s">子分类6</span></div><div class="ct" style="top:102px"><i></i><span class="n">一级分类01</span><span class="s">子分类7</span></div><div class="ct" style="top:156px"><i></i><span class="n">三级分类</span><span class="s">子分类6</span></div><div class="ct" style="top:210px"><i></i><span class="n">二级分类</span><span class="s">子分类6</span></div></div>
<div id="main"><div id="min">
<div id="tabs"><span style="left:0;color:#806af6">全部</span><span style="left:68px">上架中</span><span style="left:150px">已下架</span><span style="left:232px">已隐藏</span><div class="bar"></div></div>
<div id="title">商品库</div>
<div class="btn w" style="left:962px"><svg width="14" height="14" viewBox="0 0 14 14" style="left:8px;top:8px"><path d="M11.600 4.500A5.200 5.200 0 1012.200 7" fill="none" stroke="#606266" stroke-width="1.100"/><path d="M12.300 1.800v3h-3" fill="none" stroke="#606266" stroke-width="1.100"/></svg></div>
<div class="btn w" style="left:1006px"><svg width="14" height="14" viewBox="0 0 14 14" style="left:8px;top:8px"><circle cx="6.500" cy="6.500" r="5" fill="none" stroke="#606266" stroke-width="1.100"/><path d="M10.200 10.200l2.600 2.600" stroke="#606266" stroke-width="1.100"/></svg></div>
<div class="btn" style="left:1050px;width:80px;background:#806af6;color:#fff;line-height:32px;padding-left:21px"><svg width="12" height="12" viewBox="0 0 12 12" style="left:17px;top:10px"><path d="M6 .500v11M.500 6h11" stroke="#fff" stroke-width="1.100"/></svg>添加</div>
<div class="btn" style="left:1142px;width:94px;background:#fdeeee;border:1px solid #f8c4c4;color:#e67272;padding-left:19px"><svg width="13" height="13" viewBox="0 0 14 14" style="left:15px;top:9px"><path d="M1 3.500h12M5 3.500v-2h4v2M2.500 3.500v9.500h9V3.500M5.500 6v4.500M8.500 6v4.500" fill="none" stroke="#e67272" stroke-width="1.100"/></svg>回收站</div>
<div id="th"><div class="cb" style="left:17px;top:13px"></div><span style="left:60px">ID</span><i class="sort" style="left:83px"></i><span style="left:150px">商品</span>
<span style="left:590px">价格</span><i class="sort" style="left:625px"></i><span style="left:740px">销量</span><i class="sort" style="left:775px"></i>
<span style="left:840px">浏览量</span><i class="sort" style="left:889px"></i><span style="left:940px">库存</span><span style="left:988px">操作</span></div>
<div class="row" style="top:155px"><div class="cb" style="left:17px;top:33px"></div>
<span class="c" style="left:60px;top:30px">32</span><svg class="ic" width="14" height="14" viewBox="0 0 14 14" style="position:absolute;left:175px;top:33px"><path d="M1.500 1.500h11v11h-11zM1.500 10.500l3.200-3.300 2.300 2.200 2-1.700 3.500 3.300" fill="none" stroke="#606266" stroke-width="1"/><circle cx="5" cy="4.800" r="1" fill="none" stroke="#606266" stroke-width="1"/></svg><div class="tt">3333</div><div class="st">44444</div>
<span class="c" style="left:590px;top:30px">888.00</span>
<span class="c" style="left:740px;top:30px">0</span><span class="c" style="left:840px;top:30px">3</span><span class="c" style="left:940px;top:30px">0</span><svg class="ic" width="13" height="13" viewBox="0 0 14 14" style="position:absolute;top:33px;left:960px"><path d="M1.500 4.200h11v8.300h-11zM1.500 4.200l1-2.700h9l1 2.700M7 6.200v4.400M4.800 8.400h4.400" fill="none" stroke="#806af6" stroke-width="1.100"/></svg>
<div class="fix"><div class="tag g">上架中<svg class="ic" width="10" height="6.0" viewBox="0 0 10 6"><path d="M1 1l4 4 4-4" fill="none" stroke="#95d475" stroke-width="1.1"/></svg></div><a class="p" style="left:94px">编辑</a><a class="p" style="left:140px">复制</a><a class="d" style="left:186px">删除</a></div></div>
<div class="row alt" style="top:235px"><div class="cb" style="left:17px;top:33px"></div>
<span class="c" style="left:60px;top:30px">31</span><div class="img" style="background:#95a4c0"><b>·主图·</b></div><div class="tt">洁丽雅（Grace）3条抗菌新疆棉毛巾 纯棉柔软家用...</div><div class="st">AAA级抗菌</div>
<span class="c" style="left:590px;top:30px">15.00</span>
<span class="c" style="left:740px;top:30px">7</span><span class="c" style="left:840px;top:30px">32</span><span class="c" style="left:940px;top:30px">10</span><svg class="ic" width="13" height="13" viewBox="0 0 14 14" style="position:absolute;top:33px;left:968px"><path d="M1.500 4.200h11v8.300h-11zM1.500 4.200l1-2.700h9l1 2.700M7 6.200v4.400M4.800 8.400h4.400" fill="none" stroke="#806af6" stroke-width="1.100"/></svg>
<div class="fix"><div class="tag g">上架中<svg class="ic" width="10" height="6.0" viewBox="0 0 10 6"><path d="M1 1l4 4 4-4" fill="none" stroke="#95d475" stroke-width="1.1"/></svg></div><a class="p" style="left:94px">编辑</a><a class="p" style="left:140px">复制</a><a class="d" style="left:186px">删除</a></div></div>
<div class="row" style="top:315px"><div class="cb" style="left:17px;top:33px"></div>
<span class="c" style="left:60px;top:30px">30</span><div class="img" style="background:#e3cfc9"><b>·主图·</b></div><div class="tt">心相印卷纸厨房卷纸 吸油吸水厨房用纸 75节2卷纸巾...</div><div class="st">吸油吸水厨房用纸</div>
<span class="c" style="left:590px;top:30px">16.00</span>
<span class="c" style="left:740px;top:30px">3</span><span class="c" style="left:840px;top:30px">29</span><span class="c" style="left:940px;top:30px">25</span><svg class="ic" width="13" height="13" viewBox="0 0 14 14" style="position:absolute;top:33px;left:968px"><path d="M1.500 4.200h11v8.300h-11zM1.500 4.200l1-2.700h9l1 2.700M7 6.200v4.400M4.800 8.400h4.400" fill="none" stroke="#806af6" stroke-width="1.100"/></svg>
<div class="fix"><div class="tag g">上架中<svg class="ic" width="10" height="6.0" viewBox="0 0 10 6"><path d="M1 1l4 4 4-4" fill="none" stroke="#95d475" stroke-width="1.1"/></svg></div><a class="p" style="left:94px">编辑</a><a class="p" style="left:140px">复制</a><a class="d" style="left:186px">删除</a></div></div>
<div class="row alt" style="top:395px"><div class="cb" style="left:17px;top:33px"></div>
<span class="c" style="left:60px;top:30px">29</span><div class="img" style="background:#d9d9d9"><b>·主图·</b></div><div class="tt">水星家纺 床上四件套100%纯棉被套床单枕套床上用...</div><div class="st">100%纯棉</div>
<span class="c" style="left:590px;top:30px">298.00</span>
<span class="c" style="left:740px;top:30px">1</span><span class="c" style="left:840px;top:30px">14</span><span class="c" style="left:940px;top:30px">17</span><svg class="ic" width="13" height="13" viewBox="0 0 14 14" style="position:absolute;top:33px;left:968px"><path d="M1.500 4.200h11v8.300h-11zM1.500 4.200l1-2.700h9l1 2.700M7 6.200v4.400M4.800 8.400h4.400" fill="none" stroke="#806af6" stroke-width="1.100"/></svg>
<div class="fix"><div class="tag r">已下架<svg class="ic" width="10" height="6.0" viewBox="0 0 10 6"><path d="M1 1l4 4 4-4" fill="none" stroke="#f89898" stroke-width="1.1"/></svg></div><a class="p" style="left:94px">编辑</a><a class="p" style="left:140px">复制</a><a class="d" style="left:186px">删除</a></div></div>
<div class="row" style="top:475px"><div class="cb" style="left:17px;top:33px"></div>
<span class="c" style="left:60px;top:30px">26</span><div class="img" style="background:#bccadc"><b>·主图·</b></div><div class="tt">SOO行李箱男万向轮拉杆箱耐磨抗摔26英寸A330旅...</div><div class="st">万向轮拉杆箱耐磨抗摔</div>
<span class="c" style="left:590px;top:20px">168.00</span><div class="pill">多规格<svg class="ic" width="9" height="5.4" viewBox="0 0 10 6"><path d="M1 1l4 4 4-4" fill="none" stroke="#fff" stroke-width="1.1"/></svg></div>
<span class="c" style="left:740px;top:30px">5</span><span class="c" style="left:840px;top:30px">230</span><span class="c" style="left:940px;top:30px">183</span>
<div class="fix"><div class="tag g">上架中<svg class="ic" width="10" height="6.0" viewBox="0 0 10 6"><path d="M1 1l4 4 4-4" fill="none" stroke="#95d475" stroke-width="1.1"/></svg></div><a class="p" style="left:94px">编辑</a><a class="p" style="left:140px">复制</a><a class="d" style="left:186px">删除</a></div></div>
<div class="row alt" style="top:555px"><div class="cb" style="left:17px;top:33px"></div>
<span class="c" style="left:60px;top:30px">24</span><div class="img" style="background:#a9acb0"><b>·主图·</b></div><div class="tt">【UPF80+】波司登防晒衣2022年夏季防紫外线冰丝...</div><div class="st">夏季防紫外线冰丝</div>
<span class="c" style="left:590px;top:20px">349.00</span><div class="pill">多规格<svg class="ic" width="9" height="5.4" viewBox="0 0 10 6"><path d="M1 1l4 4 4-4" fill="none" stroke="#fff" stroke-width="1.1"/></svg></div>
<span class="c" style="left:740px;top:30px">9</span><span class="c" style="left:840px;top:30px">258</span><span class="c" style="left:940px;top:30px">142</span>
<div class="fix"><div class="tag g">上架中<svg class="ic" width="10" height="6.0" viewBox="0 0 10 6"><path d="M1 1l4 4 4-4" fill="none" stroke="#95d475" stroke-width="1.1"/></svg></div><a class="p" style="left:94px">编辑</a><a class="p" style="left:140px">复制</a><a class="d" style="left:186px">删除</a></div></div>
<div class="row" style="top:635px"><div class="cb" style="left:17px;top:33px"></div>
<span class="c" style="left:60px;top:30px">22</span><div class="img" style="background:#a3b79b"><b>·主图·</b></div><div class="tt">猫人男士睡衣男夏季100%纯棉薄款圆领套头短袖套...</div><div class="st">休闲运动可外穿家居服</div>
<span class="c" style="left:590px;top:20px">18.99</span><div class="pill">多规格<svg class="ic" width="9" height="5.4" viewBox="0 0 10 6"><path d="M1 1l4 4 4-4" fill="none" stroke="#fff" stroke-width="1.1"/></svg></div>
<span class="c" style="left:740px;top:30px">13</span><span class="c" style="left:840px;top:30px">68</span><span class="c" style="left:940px;top:30px">55</span><svg class="ic" width="13" height="13" viewBox="0 0 14 14" style="position:absolute;top:33px;left:968px"><path d="M1.500 4.200h11v8.300h-11zM1.500 4.200l1-2.700h9l1 2.700M7 6.200v4.400M4.800 8.400h4.400" fill="none" stroke="#806af6" stroke-width="1.100"/></svg>
<div class="fix"><div class="tag g">上架中<svg class="ic" width="10" height="6.0" viewBox="0 0 10 6"><path d="M1 1l4 4 4-4" fill="none" stroke="#95d475" stroke-width="1.1"/></svg></div><a class="p" style="left:94px">编辑</a><a class="p" style="left:140px">复制</a><a class="d" style="left:186px">删除</a></div></div>
<div class="row alt" style="top:715px"><div class="cb" style="left:17px;top:33px"></div>
<span class="c" style="left:60px;top:30px">21</span><div class="img" style="background:#7b95ad"><b>·主图·</b></div><div class="tt">CACUSS B0520帽子男百搭潮流棒球帽女休闲户外鸭...</div><div class="st">百搭潮流棒球帽</div>
<span class="c" style="left:590px;top:20px">69.00</span><div class="pill">多规格<svg class="ic" width="9" height="5.4" viewBox="0 0 10 6"><path d="M1 1l4 4 4-4" fill="none" stroke="#fff" stroke-width="1.1"/></svg></div>
<span class="c" style="left:740px;top:30px">3</span><span class="c" style="left:840px;top:30px">20</span><span class="c" style="left:940px;top:30px">33</span><svg class="ic" width="13" height="13" viewBox="0 0 14 14" style="position:absolute;top:33px;left:968px"><path d="M1.500 4.200h11v8.300h-11zM1.500 4.200l1-2.700h9l1 2.700M7 6.200v4.400M4.800 8.400h4.400" fill="none" stroke="#806af6" stroke-width="1.100"/></svg>
<div class="fix"><div class="tag g">上架中<svg class="ic" width="10" height="6.0" viewBox="0 0 10 6"><path d="M1 1l4 4 4-4" fill="none" stroke="#95d475" stroke-width="1.1"/></svg></div><a class="p" style="left:94px">编辑</a><a class="p" style="left:140px">复制</a><a class="d" style="left:186px">删除</a></div></div>
<div class="row" style="top:795px"><div class="cb" style="left:17px;top:33px"></div>
<span class="c" style="left:60px;top:30px">19</span><div class="img" style="background:#ddc9a8"><b>·主图·</b></div><div class="tt"><span style="letter-spacing:.42px">Apple iPhone 13 Pro Max (A2644) 256GB </span>苍岭绿...</div><div class="st"><span style="letter-spacing:.34px">Apple iPhone 13 Pro Max (A2644) 256GB </span>苍岭绿色 支持移...</div>
<span class="c" style="left:590px;top:30px">7980.00</span>
<span class="c" style="left:740px;top:30px">1</span><span class="c" style="left:840px;top:30px">56</span><span class="c" style="left:940px;top:30px">19</span><svg class="ic" width="13" height="13" viewBox="0 0 14 14" style="position:absolute;top:33px;left:968px"><path d="M1.500 4.200h11v8.300h-11zM1.500 4.200l1-2.700h9l1 2.700M7 6.200v4.400M4.800 8.400h4.400" fill="none" stroke="#806af6" stroke-width="1.100"/></svg>
<div class="fix"><div class="tag g">上架中<svg class="ic" width="10" height="6.0" viewBox="0 0 10 6"><path d="M1 1l4 4 4-4" fill="none" stroke="#95d475" stroke-width="1.1"/></svg></div><a class="p" style="left:94px">编辑</a><a class="p" style="left:140px">复制</a><a class="d" style="left:186px">删除</a></div></div>
<div class="row alt" style="top:875px"><div class="cb" style="left:17px;top:33px"></div>
<span class="c" style="left:60px;top:30px">18</span><div class="img" style="background:#e8e1d8"><b>·主图·</b></div><div class="tt"><span style="letter-spacing:.3px">Apple Watch Series 7 </span>智能手表GPS款41 毫米星光...</div><div class="st">智能手表GPS</div>
<span class="c" style="left:590px;top:20px">2999.00</span><div class="pill">多规格<svg class="ic" width="9" height="5.4" viewBox="0 0 10 6"><path d="M1 1l4 4 4-4" fill="none" stroke="#fff" stroke-width="1.1"/></svg></div>
<span class="c" style="left:740px;top:30px">0</span><span class="c" style="left:840px;top:30px">71</span><span class="c" style="left:940px;top:30px">59</span><svg class="ic" width="13" height="13" viewBox="0 0 14 14" style="position:absolute;top:33px;left:968px"><path d="M1.500 4.200h11v8.300h-11zM1.500 4.200l1-2.700h9l1 2.700M7 6.200v4.400M4.800 8.400h4.400" fill="none" stroke="#806af6" stroke-width="1.100"/></svg>
<div class="fix"><div class="tag g">上架中<svg class="ic" width="10" height="6.0" viewBox="0 0 10 6"><path d="M1 1l4 4 4-4" fill="none" stroke="#95d475" stroke-width="1.1"/></svg></div><a class="p" style="left:94px">编辑</a><a class="p" style="left:140px">复制</a><a class="d" style="left:186px">删除</a></div></div>
<div id="shadow"></div>
</div></div>
<div class="fab" style="left:1613px;top:1176px;width:39px;height:39px"><svg width="15" height="15.500" viewBox="0 0 15 15.500" style="position:absolute;left:12.500px;top:11.500px"><path fill="#806af6" d="M7.500 0C4.600 0 2.600 2.200 2.600 5v3.400C1.500 8.700.6 9.600.6 10.700c0 .700.500 1.200 1.200 1.200h11.400c.7 0 1.200-.5 1.200-1.200 0-1.100-.9-2-2-2.300V5c0-2.800-2-5-4.900-5zM5.300 13.100c.3 1.400 1.200 2.400 2.200 2.400s1.900-1 2.200-2.400z"/></svg></div>
<div id="band"></div>
<div id="foot">
<span style="left:20px">已选择 0 项</span>
<div class="fb" style="left:105px;background:#fab6b6">删除</div><div class="fb" style="left:177px;background:#b3e19d">上架</div><div class="fb" style="left:249px;background:#fab6b6">下架</div><div class="fb" style="left:321px;background:#c8c9cc">隐藏</div>
<span style="left:910px;color:#606266;font-size:14.500px;letter-spacing:.1px">共 23 条</span>
<div id="psel"><span style="left:27px;top:5px;color:#606266;font-size:14.500px;letter-spacing:.3px">10条/页</span><div style="position:absolute;left:103px;top:13px"><svg class="ic" width="11" height="6.6" viewBox="0 0 10 6"><path d="M1 1l4 4 4-4" fill="none" stroke="#c0c4cc" stroke-width="1.1"/></svg></div></div>
<svg width="7" height="11" viewBox="0 0 7 11" style="position:absolute;left:1135px;top:22.500px"><path d="M5.800 .800L1.200 5.500l4.600 4.700" fill="none" stroke="#c0c4cc" stroke-width="1.100"/></svg><span style="left:1166px;color:#806af6;font-weight:bold;font-size:14.500px">1</span><span style="left:1198px;font-size:14.500px">2</span><span style="left:1230px;font-size:14.500px">3</span><svg width="7" height="11" viewBox="0 0 7 11" style="position:absolute;left:1263.500px;top:22.500px"><path d="M1.200 .800L5.800 5.500 1.200 10.200" fill="none" stroke="#303133" stroke-width="1.100"/></svg><span style="left:1300px;color:#606266">前往</span>
</div>
<div class="fab" style="left:1613px;top:1225px;box-shadow:none"><svg width="16" height="16" viewBox="0 0 16 16" style="position:absolute;left:12.500px;top:12.500px"><path fill="#7a68ee" d="M8.300.2a7.500 7.500 0 00-6.500 11.300L.3 15.600l4.400-1.200A7.500 7.500 0 108.300.2z"/><circle cx="4.900" cy="7.700" r="1" fill="#fff"/><circle cx="8.300" cy="7.700" r="1" fill="#fff"/><circle cx="11.700" cy="7.700" r="1" fill="#fff"/></svg></div>
<div id="wm"><div class="it"><b>IT</b></div><div class="l1"><span style="color:#2f7f85">无</span><span style="color:#6b4a7a">忧</span><span style="color:#8b1a1a">编</span><span style="color:#111">程</span><span style="color:#6a7fa8">论</span><span style="color:#6a8fd0">坛</span></div><div class="l2">就爱无忧<i>whct.net</i></div><div class="ul"></div></div>

</div>
</body></html>
